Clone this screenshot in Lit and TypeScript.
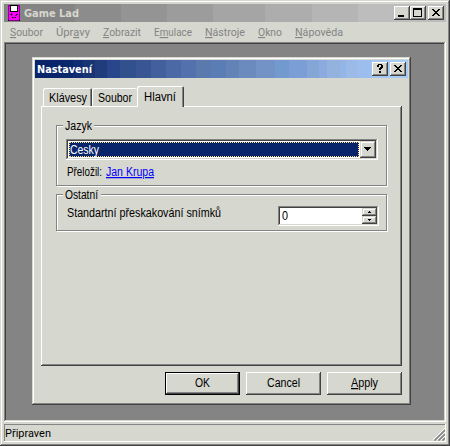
import { LitElement, html, svg, css, unsafeCSS } from "lit";
import { customElement } from "lit/decorators.js";

// Text run fitted to a fixed width; "&" marks the accelerator letter that follows it.
const label = (text: string, width: number, cls = "") => {
  const i = text.indexOf("&");
  const body =
    i < 0
      ? svg`<text x="0" y="12" textLength=${width} lengthAdjust="spacingAndGlyphs">${text}</text>`
      : svg`<text x="0" y="12" textLength=${width} lengthAdjust="spacingAndGlyphs">${text.slice(0, i)}<tspan class="key">${text[i + 1]}</tspan>${text.slice(i + 2)}</text>`;
  return html`<svg class="label ${cls}" width=${width} height="16">${body}</svg>`;
};

const glyph = (d: string, w: number, h: number) =>
  html`<svg class="glyph" width=${w} height=${h} viewBox="0 0 ${w} ${h}"><path d=${d} /></svg>`;

const CROSS =
  "M0 0h2v1h1v1h2v-1h1v-1h2v1h-1v1h-1v1h-1v1h1v1h1v1h1v1h-2v-1h-1v-1h-2v1h-1v1h-2v-1h1v-1h1v-1h1v-1h-1v-1h-1v-1h-1z";
const QUESTION = "M1 0h4v1h1v3h-1v1h-1v1h-2v-2h1v-1h1v-2h-2v2h-2v-2h1zM2 7h2v2h-2z";

// The active caption fades in flat bands, as on a palette display.
const BANDS: [string, number][] = [
  ["#08246b", 0], ["#08286b", 28], ["#102c73", 38], ["#183473", 48], ["#213c7b", 60],
  ["#29458c", 72], ["#31518c", 85], ["#395594", 101], ["#42619c", 116], ["#4a69a5", 131],
  ["#5271ad", 146], ["#5a79ad", 161], ["#5a7db5", 176], ["#6382b5", 191], ["#6b8abd", 204],
  ["#7392c6", 221], ["#739ace", 240], ["#7b9ed6", 254], ["#84a6d6", 272], ["#8caade", 284],
  ["#94b2de", 292], ["#94b6e7", 305], ["#9cbae7", 311], ["#9cbeef", 323], ["#a5c7ef", 336],
  ["#a5cbf7", 352],
];
const stops = BANDS.map(([c, x], i) => `${c} ${x}px ${i + 1 < BANDS.length ? BANDS[i + 1][1] : 373}px`).join(", ");

const MENU: [string, number][] = [
  ["&Soubor", 33],
  ["Úpr&avy", 34],
  ["&Zobrazit", 38],
  ["E&mulace", 38],
  ["&Nástroje", 40],
  ["&Okno", 24],
  ["&Nápověda", 48],
];

@customElement("app-root")
export class AppRoot extends LitElement {
  static styles = css`
    :host {
      display: block;
      width: 450px;
      height: 446px;
      --face: #d6d7ce;
      --gray: #848484;
      --dark: #424142;
      --frame: inset -1px -1px var(--dark), inset 1px 1px var(--face), inset -2px -2px var(--gray), inset 2px 2px #fff;
      --raised: inset -1px -1px var(--dark), inset 1px 1px #fff, inset -2px -2px var(--gray);
      --sunken: inset -1px -1px #fff, inset 1px 1px var(--gray), inset -2px -2px var(--face), inset 2px 2px var(--dark);
    }
    * { box-sizing: border-box; }
    svg { display: block; flex: none; }
    .label {
      overflow: visible;
      font: 12.5px "Liberation Sans", sans-serif;
      fill: #000;
    }
    .key { text-decoration: underline; }
    .bold { font: bold 11px "DejaVu Sans", sans-serif; }
    .soft { font: 11.5px Roboto, sans-serif; fill: var(--gray); }
    .status-text { font: 11.5px Roboto, sans-serif; }
    .pale { fill: var(--face); }
    .white { fill: #fff; }
    .link { fill: #0000ff; text-decoration: underline; }
    .glyph { shape-rendering: crispEdges; }
    .window {
      width: 450px;
      height: 446px;
      padding: 4px;
      background: var(--face);
      box-shadow: var(--frame);
      display: flex;
      flex-direction: column;
    }
    .title {
      height: 18px;
      flex: none;
      display: flex;
      padding: 2px 2px 0 4px;
      background: linear-gradient(90deg,
        #848484 71px, #8c8c8c 71px 117px, #949494 117px 163px, #9c9c9c 163px 209px,
        #a5a5a5 209px 261px, #adadad 261px 308px, #b5b5b5 308px 354px, #bdbdbd 354px);
    }
    .title .app-icon { margin: -1px 4px 0 0; }
    .title .label { margin-top: -1px; }
    .spacer { flex: 1; }
    .cap {
      width: 16px;
      height: 14px;
      flex: none;
      background: var(--face);
      box-shadow: var(--raised);
      padding: 3px 0 0 4px;
    }
    .cap.max { padding: 2px 0 0 3px; }
    .cap.help { padding: 2px 0 0 5px; }
    .cap.close { margin-left: 2px; }
    .menu {
      height: 20px;
      flex: none;
      display: flex;
      gap: 13px;
      padding: 2px 0 0 6px;
    }
    .workspace {
      height: 380px;
      flex: none;
      background: var(--gray);
      box-shadow: var(--sunken);
      padding: 15px 0 0 28px;
    }
    .status {
      height: 18px;
      flex: none;
      margin-top: 2px;
      box-shadow: inset -1px -1px #fff, inset 1px 1px var(--gray);
      padding: 1px 0 0 1px;
      display: flex;
      justify-content: space-between;
    }
    .grip { margin: 3px 1px 0 0; }
    .dialog {
      width: 379px;
      height: 348px;
      padding: 3px;
      background: var(--face);
      box-shadow: var(--frame);
    }
    .title.active {
      padding-left: 2px;
      background: linear-gradient(90deg, ${unsafeCSS(stops)});
    }
    .tabs {
      height: 28px;
      display: flex;
      align-items: flex-end;
      padding-left: 8px;
    }
    .tab {
      height: 18px;
      width: 49px;
      padding: 2px 0 0 6px;
      border-radius: 2px 2px 0 0;
      box-shadow: inset 1px 1px #fff, inset -1px 0 var(--dark), inset -2px 0 var(--gray);
    }
    .tab.second {
      width: 45px;
      box-shadow: inset 1px 1px #fff;
    }
    .tab.current {
      width: 47px;
      height: 21px;
      margin-bottom: -1px;
      padding: 3px 0 0 7px;
      background: var(--face);
      z-index: 1;
    }
    .page {
      width: 361px;
      height: 260px;
      margin-left: 6px;
      box-shadow: var(--raised);
      padding: 19px 0 0 15px;
    }
    .group {
      width: 331px;
      border: 1px solid var(--gray);
      box-shadow: 1px 1px #fff, inset 1px 1px #fff;
      padding: 0 0 0 9px;
    }
    .group.language { height: 61px; }
    .group.other { height: 37px; margin-top: 8px; }
    .legend {
      width: fit-content;
      height: 14px;
      margin: -8px 0 0 -3px;
      padding: 0 2px;
      background: var(--face);
    }
    .other .legend { padding-right: 3px; }
    .combo {
      width: 312px;
      height: 21px;
      margin-top: 7px;
      padding: 2px;
      background: #fff;
      box-shadow: var(--sunken);
      display: flex;
    }
    .picked {
      width: 290px;
      height: 15px;
      margin: 1px;
      background: #08246b;
      border: 1px dotted #ffdf84;
    }
    .picked .label { margin-top: -1px; }
    .drop {
      width: 16px;
      height: 17px;
      background: var(--face);
      box-shadow: var(--frame);
      padding: 6px 0 0 4px;
    }
    .credit {
      display: flex;
      gap: 4px;
      margin: 4px 0 0 1px;
    }
    .row {
      display: flex;
      justify-content: space-between;
      padding: 4px 7px 0 1px;
    }
    .spin {
      width: 101px;
      height: 20px;
      margin-top: 1px;
      padding: 2px;
      background: #fff;
      box-shadow: var(--sunken);
      display: flex;
      justify-content: space-between;
    }
    .spin .label { margin-left: 2px; }
    .arrows { width: 15px; }
    .arrow {
      height: 8px;
      background: var(--face);
      box-shadow: var(--frame);
      padding: 3px 0 0 6px;
    }
    .actions {
      display: flex;
      gap: 6px;
      margin: 6px 0 0 130px;
    }
    .button {
      width: 75px;
      height: 23px;
      box-shadow: var(--raised);
      display: flex;
      justify-content: center;
      padding-top: 3px;
    }
    .button.default {
      box-shadow: inset 0 0 0 1px #000, inset -2px -2px var(--dark), inset 2px 2px #fff, inset -3px -3px var(--gray);
    }
  `;

  private appIcon() {
    return html`<svg class="app-icon glyph" width="12" height="16" viewBox="0 0 12 16">
      <path fill="#840084" d="M0 0h12v15h-1v1h-10v-1h-1z" />
      <path fill="#ff00ff" d="M1 1h10v14h-10z" />
      <path fill="#000" d="M2 0h8v7h-8z" />
      <path fill="#fff" d="M3 1h6v5h-6z" />
      <path fill="#000" d="M0 15h1v1h-1zM11 15h1v1h-1z" />
      <path fill="#840084" d="M2 9h3v1h-3zM3 8h1v3h-1zM7 10h1v-1h2v1h-1v1h-2zM5 12h3v1h-3z" />
      <path fill="#000" d="M3 9h1v1h-1zM8 9h1v1h-1zM4 12h1v1h-1zM7 12h1v1h-1z" />
    </svg>`;
  }

  private grip() {
    return html`<svg class="grip" width="12" height="13" viewBox="0 0 12 13">
      <path stroke="#fff" fill="none" d="M0 12L12 0M4 12L12 4M8 12L12 8" />
      <path stroke="#848484" stroke-width="1.6" fill="none" d="M1.5 12.5L12 2M5.5 12.5L12 6M9.5 12.5L12 10" />
    </svg>`;
  }

  private dialog() {
    return html`<div class="dialog">
      <div class="title active">
        ${label("Nastavení", 55, "bold white")}
        <div class="spacer"></div>
        <div class="cap help">${glyph(QUESTION, 6, 9)}</div>
        <div class="cap close">${glyph(CROSS, 8, 7)}</div>
      </div>
      <div class="tabs">
        <div class="tab">${label("Klávesy", 38)}</div>
        <div class="tab second">${label("Soubor", 34)}</div>
        <div class="tab current">${label("Hlavní", 32)}</div>
      </div>
      <div class="page">
        <div class="group language">
          <div class="legend">${label("Jazyk", 27)}</div>
          <div class="combo">
            <div class="picked">${label("Cesky", 29, "white")}</div>
            <div class="drop">${glyph("M0 0h7v1h-1v1h-1v1h-1v1h-1v-1h-1v-1h-1v-1h-1z", 7, 4)}</div>
          </div>
          <div class="credit">${label("Přeložil:", 35)}${label("Jan Krupa", 48, "link")}</div>
        </div>
        <div class="group other">
          <div class="legend">${label("Ostatní", 33)}</div>
          <div class="row">
            ${label("Standartní přeskakování snímků", 154)}
            <div class="spin">
              ${label("0", 6)}
              <div class="arrows">
                <div class="arrow">${glyph("M1 0h1v1h1v1h-3v-1h1z", 3, 2)}</div>
                <div class="arrow">${glyph("M0 0h3v1h-1v1h-1v-1h-1z", 3, 2)}</div>
              </div>
            </div>
          </div>
        </div>
      </div>
      <div class="actions">
        <div class="button default">${label("OK", 15)}</div>
        <div class="button">${label("Cancel", 33)}</div>
        <div class="button">${label("&Apply", 27)}</div>
      </div>
    </div>`;
  }

  render() {
    return html`<div class="window">
      <div class="title">
        ${this.appIcon()}${label("Game Lad", 55, "bold pale")}
        <div class="spacer"></div>
        <div class="cap">${glyph("M0 6h6v2h-6z", 6, 8)}</div>
        <div class="cap max">${glyph("M0 0h9v9h-9zM1 2v6h7v-6z", 9, 9)}</div>
        <div class="cap close">${glyph(CROSS, 8, 7)}</div>
      </div>
      <div class="menu">${MENU.map(([text, width]) => label(text, width, "soft"))}</div>
      <div class="workspace">${this.dialog()}</div>
      <div class="status">${label("Připraven", 46, "status-text")}${this.grip()}</div>
    </div>`;
  }
}
